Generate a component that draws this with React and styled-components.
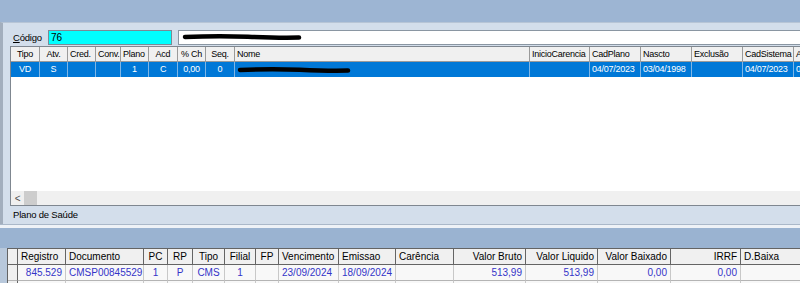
import React from 'react';
import styled, { createGlobalStyle } from 'styled-components';

const Global = createGlobalStyle`
  html, body { margin: 0; padding: 0; background: #9bb4d2; }
  body { font-family: "Liberation Sans", Arial, sans-serif; }
`;

const SANS = `"Liberation Sans", Arial, sans-serif`;

const Screen = styled.div`
  width: 800px;
  height: 283px;
  overflow: hidden;
  display: flex;
  flex-direction: column;
  background: #9bb4d2;
`;

const TopBand = styled.div`
  flex: none;
  height: 22px;
  background: #9db5d3;
`;

const Panel = styled.div`
  flex: none;
  height: 202px;
  box-sizing: border-box;
  background: #d3deeb;
  border-top: 1px solid #b7c5d6;
  border-left: 3px solid #a2aebd;
  padding: 5px 0 0 7px;
  display: flex;
  flex-direction: column;
`;

const CodeRow = styled.div`
  flex: none;
  height: 18px;
  display: flex;
  align-items: center;
`;

const Label = styled.span`
  flex: none;
  width: 38px;
  padding-left: 3px;
  box-sizing: border-box;
  font-size: 9.5px;
  letter-spacing: -0.2px;
  font-family: ${SANS};
  color: #000;
  white-space: nowrap;
  u { text-decoration: underline; }
`;

const Input = styled.div`
  height: 15px;
  box-sizing: border-box;
  border: 1px solid ${p => (p.$cyan ? '#7a8a96' : '#8a96a2')};
  background: ${p => (p.$cyan ? '#00ffff' : '#ffffff')};
  width: ${p => p.$w}px;
  flex: none;
  margin-right: 6px;
  font-family: ${SANS};
  font-size: 10px;
  line-height: 13px;
  padding-left: 2px;
  color: #000;
  display: flex;
  align-items: center;
`;

const GridFrame = styled.div`
  flex: none;
  width: 900px;
  height: 160px;
  box-sizing: border-box;
  border: 1px solid #7f8790;
  border-right: none;
  background: #fff;
  display: flex;
  flex-direction: column;
  font-family: ${SANS};
  font-size: 9px;
  letter-spacing: -0.25px;
`;

const Row = styled.div`
  display: flex;
  flex: none;
  height: 15px;
`;

const HeadCell = styled.div`
  flex: none;
  width: ${p => p.$w}px;
  box-sizing: border-box;
  height: 15px;
  line-height: 14px;
  background: #f0f0f0;
  border-right: 1px solid #9a9a9a;
  border-bottom: 1px solid #9a9a9a;
  padding: 0 2px;
  text-align: ${p => p.$a || 'left'};
  white-space: nowrap;
  overflow: hidden;
  color: #000;
`;

const SelCell = styled.div`
  flex: none;
  width: ${p => p.$w}px;
  box-sizing: border-box;
  height: 15px;
  line-height: 15px;
  background: #0078d7;
  border-right: 1px solid #7fb6e6;
  padding: 0 2px;
  text-align: ${p => p.$a || 'left'};
  white-space: nowrap;
  overflow: hidden;
  color: #fff;
`;

const Spacer = styled.div`
  flex: 1;
`;

const ScrollBar = styled.div`
  flex: none;
  height: 14px;
  background: #f0f0f0;
  display: flex;
  align-items: stretch;
`;

const ArrowBtn = styled.div`
  width: 13px;
  display: flex;
  align-items: center;
  justify-content: center;
  color: #505050;
  font-size: 10px;
  font-family: ${SANS};
`;

const Thumb = styled.div`
  width: 13px;
  background: #cdcdcd;
`;

const Caption = styled.div`
  flex: 1;
  padding-left: 3px;
  font-family: ${SANS};
  font-size: 9.5px;
  letter-spacing: -0.2px;
  line-height: 17px;
  color: #000;
`;

const Separator = styled.div`
  flex: none;
  height: 3px;
  border-top: 1px solid #aab8c9;
  background: #eef2f7;
`;

const LowerBand = styled.div`
  flex: none;
  height: 20px;
  background: #9ab3d1;
`;

const LowerArea = styled.div`
  flex: 1;
  padding-left: 7px;
  background: #b8c8db;
`;

const LowerGrid = styled.div`
  width: 900px;
  border-top: 1px solid #646464;
  border-left: 1px solid #646464;
  background: #fff;
  font-family: ${SANS};
  font-size: 10px;
`;

const LRow = styled.div`
  display: flex;
  height: 16px;
`;

const LHead = styled.div`
  flex: none;
  width: ${p => p.$w}px;
  box-sizing: border-box;
  height: 16px;
  line-height: 15px;
  background: #f0f0f0;
  border-right: 1px solid #646464;
  border-bottom: 1px solid #646464;
  padding: 0 3px;
  text-align: ${p => p.$a || 'left'};
  white-space: nowrap;
  overflow: hidden;
  color: #000;
`;

const LCell = styled.div`
  flex: none;
  width: ${p => p.$w}px;
  box-sizing: border-box;
  height: 16px;
  line-height: 15px;
  background: ${p => (p.$ind ? '#f0f0f0' : '#f8f8f8')};
  border-right: 1px solid ${p => (p.$ind ? '#646464' : '#c8c8c8')};
  border-bottom: 1px solid #b4b4b4;
  padding: 0 3px;
  text-align: ${p => p.$a || 'left'};
  white-space: nowrap;
  overflow: hidden;
  color: #3434c8;
`;

const Scribble = ({ w }) => (
  <svg width={w} height="8" viewBox={`0 0 ${w} 8`} style={{ display: 'block' }}>
    <path
      d={`M3 4 Q ${w * 0.3} 2.5 ${w * 0.55} 3.8 T ${w - 3} 4.6`}
      stroke="#000"
      strokeWidth="4.5"
      strokeLinecap="round"
      fill="none"
    />
  </svg>
);

const RedactBox = styled.div`
  display: flex;
  align-items: center;
  height: 100%;
  margin-left: ${p => p.$ml || 0}px;
`;

const topCols = [
  { h: 'Tipo', w: 29, ha: 'center', v: 'VD', va: 'center' },
  { h: 'Atv.', w: 28, ha: 'center', v: 'S', va: 'center' },
  { h: 'Cred.', w: 28, ha: 'left', v: '' },
  { h: 'Conv.', w: 25, ha: 'left', v: '' },
  { h: 'Plano', w: 28, ha: 'left', v: '1', va: 'center' },
  { h: 'Acd', w: 29, ha: 'center', v: 'C', va: 'center' },
  { h: '% Ch', w: 28, ha: 'center', v: '0,00', va: 'center' },
  { h: 'Seq.', w: 29, ha: 'center', v: '0', va: 'center' },
  { h: 'Nome', w: 295, ha: 'left', redact: true },
  { h: 'InicioCarencia', w: 60, ha: 'left', v: '' },
  { h: 'CadPlano', w: 51, v: '04/07/2023' },
  { h: 'Nascto', w: 51, v: '03/04/1998' },
  { h: 'Exclusão', w: 51, v: '' },
  { h: 'CadSistema', w: 51, v: '04/07/2023' },
  { h: 'Alteração', w: 60, v: '05/07/2023' },
];

const lowCols = [
  { h: '', w: 10, ind: true },
  { h: 'Registro', w: 48, ha: 'left', v: '845.529', va: 'right' },
  { h: 'Documento', w: 78, ha: 'left', v: 'CMSP00845529' },
  { h: 'PC', w: 24, ha: 'center', v: '1', va: 'center' },
  { h: 'RP', w: 25, ha: 'center', v: 'P', va: 'center' },
  { h: 'Tipo', w: 32, ha: 'center', v: 'CMS', va: 'center' },
  { h: 'Filial', w: 31, ha: 'center', v: '1', va: 'center' },
  { h: 'FP', w: 23, ha: 'center', v: '' },
  { h: 'Vencimento', w: 60, ha: 'left', v: '23/09/2024' },
  { h: 'Emissao', w: 57, ha: 'left', v: '18/09/2024' },
  { h: 'Carência', w: 58, ha: 'left', v: '' },
  { h: 'Valor Bruto', w: 72, ha: 'right', v: '513,99', va: 'right' },
  { h: 'Valor Liquido', w: 72, ha: 'right', v: '513,99', va: 'right' },
  { h: 'Valor Baixado', w: 73, ha: 'right', v: '0,00', va: 'right' },
  { h: 'IRRF', w: 70, ha: 'right', v: '0,00', va: 'right' },
  { h: 'D.Baixa', w: 70, ha: 'left', v: '' },
];

export default function App() {
  return (
    <>
      <Global />
      <Screen>
        <TopBand />
        <Panel>
          <CodeRow>
            <Label><u>C</u>ódigo</Label>
            <Input $cyan $w={124}>76</Input>
            <Input $w={700}>
              <RedactBox $ml={1}><Scribble w={120} /></RedactBox>
            </Input>
          </CodeRow>
          <GridFrame>
            <Row>
              {topCols.map(c => (
                <HeadCell key={c.h} $w={c.w} $a={c.ha}>{c.h}</HeadCell>
              ))}
            </Row>
            <Row>
              {topCols.map(c => (
                <SelCell key={c.h} $w={c.w} $a={c.va}>
                  {c.redact ? <RedactBox><Scribble w={114} /></RedactBox> : c.v}
                </SelCell>
              ))}
            </Row>
            <Spacer />
            <ScrollBar>
              <ArrowBtn>&lt;</ArrowBtn>
              <Thumb />
            </ScrollBar>
          </GridFrame>
          <Caption>Plano de Saúde</Caption>
        </Panel>
        <Separator />
        <LowerBand />
        <LowerArea>
          <LowerGrid>
            <LRow>
              {lowCols.map((c, i) => (
                <LHead key={i} $w={c.w} $a={c.ha}>{c.h}</LHead>
              ))}
            </LRow>
            <LRow>
              {lowCols.map((c, i) => (
                <LCell key={i} $w={c.w} $a={c.va} $ind={c.ind}>{c.v}</LCell>
              ))}
            </LRow>
            <LRow>
              {lowCols.map((c, i) => (
                <LCell key={i} $w={c.w} $ind={c.ind} />
              ))}
            </LRow>
          </LowerGrid>
        </LowerArea>
      </Screen>
    </>
  );
}
